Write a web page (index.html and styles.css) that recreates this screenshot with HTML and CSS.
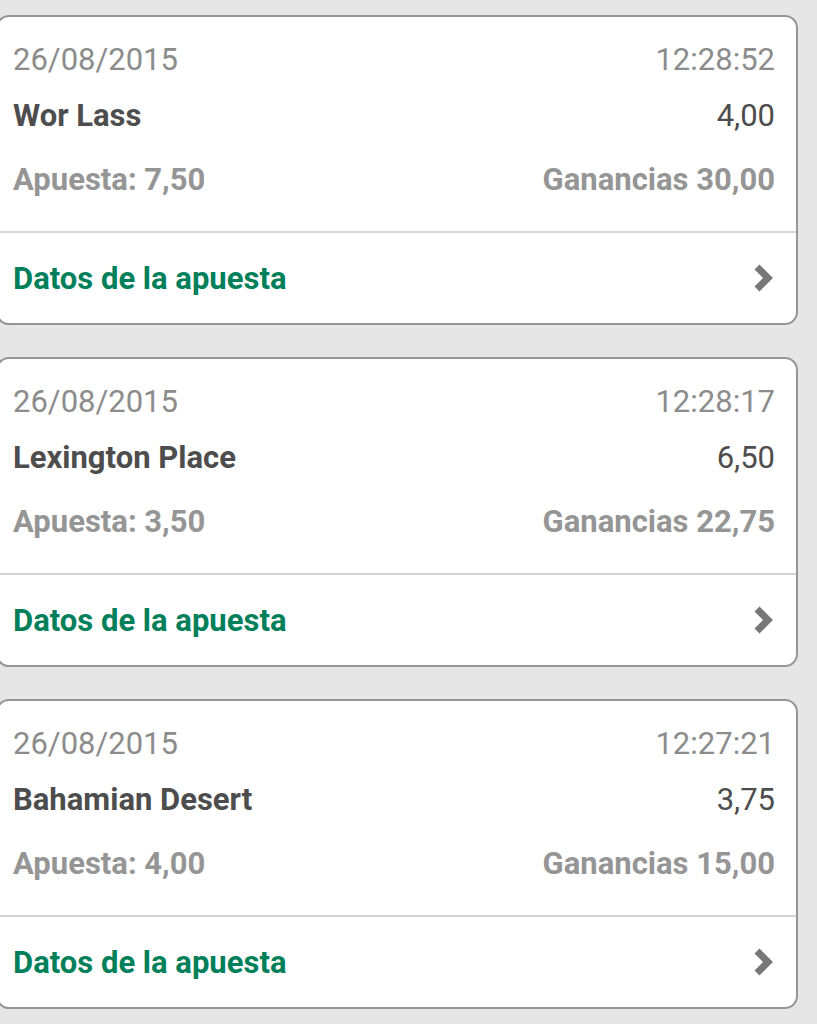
FILE: index.html
```html
<!DOCTYPE html>
<html lang="es">
<head>
    <meta charset="UTF-8">
    <meta name="viewport" content="width=device-width, initial-scale=1.0">
    <title>Mis apuestas</title>
    <link rel="stylesheet" href="styles.css">
</head>
<body>
    <div class="bet-list">
        <div class="bet-card">
            <div class="bet-info">
                <div class="row date-row"><span>26/08/2015</span><span>12:28:52</span></div>
                <div class="row name-row"><span>Wor Lass</span><span class="odds">4,00</span></div>
                <div class="row stake-row"><span>Apuesta: 7,50</span><span>Ganancias 30,00</span></div>
            </div>
            <div class="bet-link">
                <span>Datos de la apuesta</span>
                <svg class="chevron" width="22" height="28" viewBox="0 0 22 28"><polyline points="4,3 15,14 4,25" fill="none" stroke="#777" stroke-width="7"/></svg>
            </div>
        </div>
        <div class="bet-card">
            <div class="bet-info">
                <div class="row date-row"><span>26/08/2015</span><span>12:28:17</span></div>
                <div class="row name-row"><span>Lexington Place</span><span class="odds">6,50</span></div>
                <div class="row stake-row"><span>Apuesta: 3,50</span><span>Ganancias 22,75</span></div>
            </div>
            <div class="bet-link">
                <span>Datos de la apuesta</span>
                <svg class="chevron" width="22" height="28" viewBox="0 0 22 28"><polyline points="4,3 15,14 4,25" fill="none" stroke="#777" stroke-width="7"/></svg>
            </div>
        </div>
        <div class="bet-card">
            <div class="bet-info">
                <div class="row date-row"><span>26/08/2015</span><span>12:27:21</span></div>
                <div class="row name-row"><span>Bahamian Desert</span><span class="odds">3,75</span></div>
                <div class="row stake-row"><span>Apuesta: 4,00</span><span>Ganancias 15,00</span></div>
            </div>
            <div class="bet-link">
                <span>Datos de la apuesta</span>
                <svg class="chevron" width="22" height="28" viewBox="0 0 22 28"><polyline points="4,3 15,14 4,25" fill="none" stroke="#777" stroke-width="7"/></svg>
            </div>
        </div>
    </div>
</body>
</html>
```

FILE: styles.css
```css
body {
    margin: 0;
    background: #e6e6e6;
    font-family: Roboto, "Noto Sans", Arial, sans-serif;
    overflow: hidden;
}
.bet-list {
    padding-top: 15px;
}
.bet-card {
    margin: 0 19px 32px -4px;
    background: #fff;
    border: 2px solid #959595;
    border-radius: 13px;
}
.bet-info {
    padding: 15px 21px 23px 15px;
    border-bottom: 2px solid #d4d4d4;
}
.row {
    display: flex;
    justify-content: space-between;
    height: 56px;
    line-height: 56px;
}
.date-row {
    font-size: 31px;
    color: #8c8c8c;
}
.name-row {
    font-size: 31px;
    font-weight: bold;
    color: #4d4d4d;
}
.name-row .odds {
    font-weight: normal;
}
.stake-row {
    margin-top: 8px;
    font-size: 31px;
    font-weight: bold;
    color: #959595;
}
.bet-link {
    display: flex;
    justify-content: space-between;
    align-items: center;
    height: 90px;
    padding: 0 21px 0 15px;
    font-size: 31px;
    font-weight: bold;
    color: #00805a;
}
```
